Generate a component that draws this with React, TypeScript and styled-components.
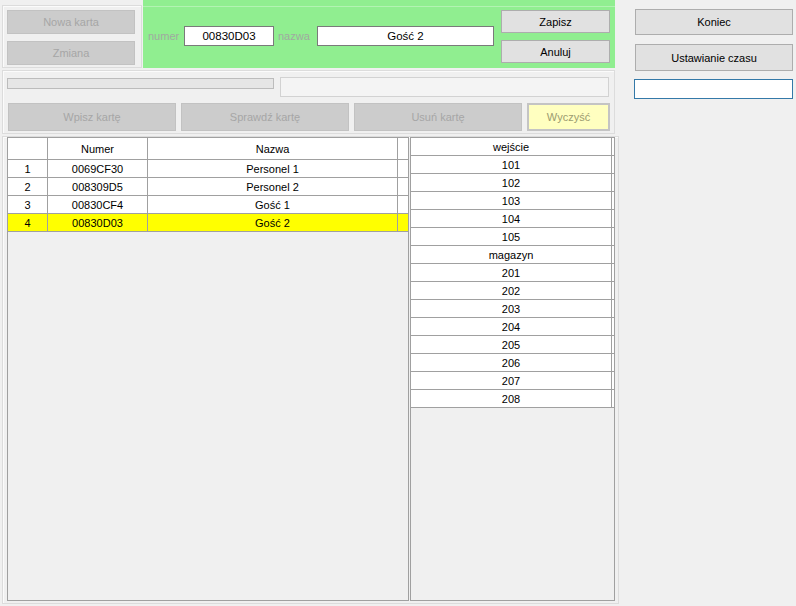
import styled, { createGlobalStyle } from "styled-components";

const GlobalStyle = createGlobalStyle`
  html, body {
    margin: 0;
    padding: 0;
    background: #f0f0f0;
    font-family: "Liberation Sans", Arial, sans-serif;
    font-size: 11px;
    color: #000;
  }
  * {
    box-sizing: border-box;
  }
`;

const Page = styled.div`
  display: flex;
  width: 796px;
  height: 606px;
  overflow: hidden;
`;

const MainColumn = styled.div`
  width: 620px;
  display: flex;
  flex-direction: column;
  padding-left: 2px;
`;

const SideColumn = styled.div`
  width: 160px;
  margin-left: 14px;
  padding-top: 9px;
  display: flex;
  flex-direction: column;
  align-items: flex-start;
`;

const TopRow = styled.div`
  display: flex;
  height: 68px;
`;

const GroupBox = styled.div`
  border: 1px solid #dcdcdc;
  box-shadow: inset 1px 1px 0 #fbfbfb;
`;

const CardGroup = styled(GroupBox)`
  margin-top: 5px;
  width: 140px;
  height: 63px;
  padding: 4px 0 0 4px;
  display: flex;
  flex-direction: column;
  gap: 7px;
`;

const GreenPanel = styled.div`
  width: 472px;
  height: 68px;
  margin-left: 1px;
  background: #90ee90;
  padding-top: 6px;
`;

const GreenFrame = styled.div`
  height: 100%;
  border-top: 1px solid #b2f3b2;
  display: flex;
  align-items: flex-start;
  padding-left: 5px;
`;

const Field = styled.div`
  display: flex;
  align-items: center;
  margin-top: 19px;
`;

const Label = styled.span<{ $w: number }>`
  width: ${(p) => p.$w}px;
  color: #a0aaa0;
  font-size: 11px;
`;

const TextBox = styled.div<{ $w: number; $muted?: boolean; $focus?: boolean }>`
  width: ${(p) => p.$w}px;
  height: 20px;
  background: ${(p) => (p.$muted ? "#f4f4f4" : "#fff")};
  border: 1px solid
    ${(p) => (p.$focus ? "#3479a8" : p.$muted ? "#d2d2d2" : "#7a7a7a")};
  display: flex;
  align-items: center;
  justify-content: center;
  font-size: 11.5px;
  flex-shrink: 0;
`;

const ActionStack = styled.div`
  display: flex;
  flex-direction: column;
  gap: 7px;
  margin-left: 7px;
  padding-top: 3px;
`;

const Button = styled.div<{
  $w: number;
  $h: number;
  $disabled?: boolean;
  $warn?: boolean;
}>`
  width: ${(p) => p.$w}px;
  height: ${(p) => p.$h}px;
  display: flex;
  align-items: center;
  justify-content: center;
  background: ${(p) =>
    p.$warn ? "#ffffc0" : p.$disabled ? "#cccccc" : "#e1e1e1"};
  border: ${(p) =>
    p.$warn
      ? "2px solid #c4c4c4"
      : `1px solid ${p.$disabled ? "#c2c2c2" : "#adadad"}`};
  color: ${(p) => (p.$warn ? "#9c9c70" : p.$disabled ? "#a6a6a6" : "#000")};
  font-size: 11px;
  flex-shrink: 0;
`;

const SideButton = styled(Button)`
  margin-left: 1px;
`;

const ToolGroup = styled(GroupBox)`
  margin-top: 2px;
  width: 613px;
  height: 64px;
  padding: 6px 0 0 4px;
`;

const ToolRow = styled.div`
  display: flex;
  align-items: flex-start;
`;

const Progress = styled.div`
  width: 267px;
  height: 11px;
  margin-top: 1px;
  margin-right: 6px;
  background: #e6e6e6;
  border: 1px solid #bcbcbc;
`;

const ButtonRow = styled.div`
  display: flex;
  gap: 5px;
  margin-top: 6px;
  margin-left: 1px;
`;

const GridGroup = styled(GroupBox)`
  margin-top: 2px;
  width: 617px;
  height: 468px;
  padding: 0 0 0 4px;
  display: flex;
  gap: 1px;
`;

const Grid = styled.div<{ $w: number }>`
  width: ${(p) => p.$w}px;
  height: 464px;
  border: 1px solid #a0a0a0;
  background: #f0f0f0;
`;

const Row = styled.div<{ $cols: string; $h?: number; $hl?: boolean }>`
  display: grid;
  grid-template-columns: ${(p) => p.$cols};
  height: ${(p) => p.$h ?? 18}px;
  background: ${(p) => (p.$hl ? "#ffff00" : "#fff")};
`;

const Cell = styled.div<{ $last?: boolean }>`
  display: flex;
  align-items: center;
  justify-content: center;
  border-bottom: 1px solid #a0a0a0;
  border-right: ${(p) => (p.$last ? "none" : "1px solid #a0a0a0")};
  font-size: 11px;
  white-space: nowrap;
  overflow: hidden;
`;

const cards = [
  { nr: "0069CF30", name: "Personel 1" },
  { nr: "008309D5", name: "Personel 2" },
  { nr: "00830CF4", name: "Gość 1" },
  { nr: "00830D03", name: "Gość 2" },
];

const zones = [
  "wejście",
  "101",
  "102",
  "103",
  "104",
  "105",
  "magazyn",
  "201",
  "202",
  "203",
  "204",
  "205",
  "206",
  "207",
  "208",
];

const cardCols = "40px 100px 250px 10px";
const zoneCols = "201px 2px";

export default function App() {
  return (
    <Page>
      <GlobalStyle />
      <MainColumn>
        <TopRow>
          <CardGroup>
            <Button $w={128} $h={24} $disabled>
              Nowa karta
            </Button>
            <Button $w={128} $h={24} $disabled>
              Zmiana
            </Button>
          </CardGroup>
          <GreenPanel>
            <GreenFrame>
              <Field>
                <Label $w={36}>numer</Label>
                <TextBox $w={90}>00830D03</TextBox>
                <Label $w={39} style={{ marginLeft: 4 }}>
                  nazwa
                </Label>
                <TextBox $w={177}>Gość 2</TextBox>
              </Field>
              <ActionStack>
                <Button $w={109} $h={23}>
                  Zapisz
                </Button>
                <Button $w={109} $h={23}>
                  Anuluj
                </Button>
              </ActionStack>
            </GreenFrame>
          </GreenPanel>
        </TopRow>

        <ToolGroup>
          <ToolRow>
            <Progress />
            <TextBox $w={329} $muted />
          </ToolRow>
          <ButtonRow>
            <Button $w={168} $h={28} $disabled>
              Wpisz kartę
            </Button>
            <Button $w={168} $h={28} $disabled>
              Sprawdź kartę
            </Button>
            <Button $w={168} $h={28} $disabled>
              Usuń kartę
            </Button>
            <Button $w={83} $h={28} $warn>
              Wyczyść
            </Button>
          </ButtonRow>
        </ToolGroup>

        <GridGroup>
          <Grid $w={402}>
            <Row $cols={cardCols} $h={22}>
              <Cell />
              <Cell>Numer</Cell>
              <Cell>Nazwa</Cell>
              <Cell $last />
            </Row>
            {cards.map((c, i) => (
              <Row key={c.nr} $cols={cardCols} $hl={i === 3}>
                <Cell>{i + 1}</Cell>
                <Cell>{c.nr}</Cell>
                <Cell>{c.name}</Cell>
                <Cell $last />
              </Row>
            ))}
          </Grid>
          <Grid $w={205}>
            {zones.map((z) => (
              <Row key={z} $cols={zoneCols}>
                <Cell>{z}</Cell>
                <Cell $last />
              </Row>
            ))}
          </Grid>
        </GridGroup>
      </MainColumn>

      <SideColumn>
        <SideButton $w={158} $h={26}>
          Koniec
        </SideButton>
        <SideButton $w={158} $h={27} style={{ marginTop: 9 }}>
          Ustawianie czasu
        </SideButton>
        <TextBox $w={159} $focus style={{ marginTop: 8 }} />
      </SideColumn>
    </Page>
  );
}
